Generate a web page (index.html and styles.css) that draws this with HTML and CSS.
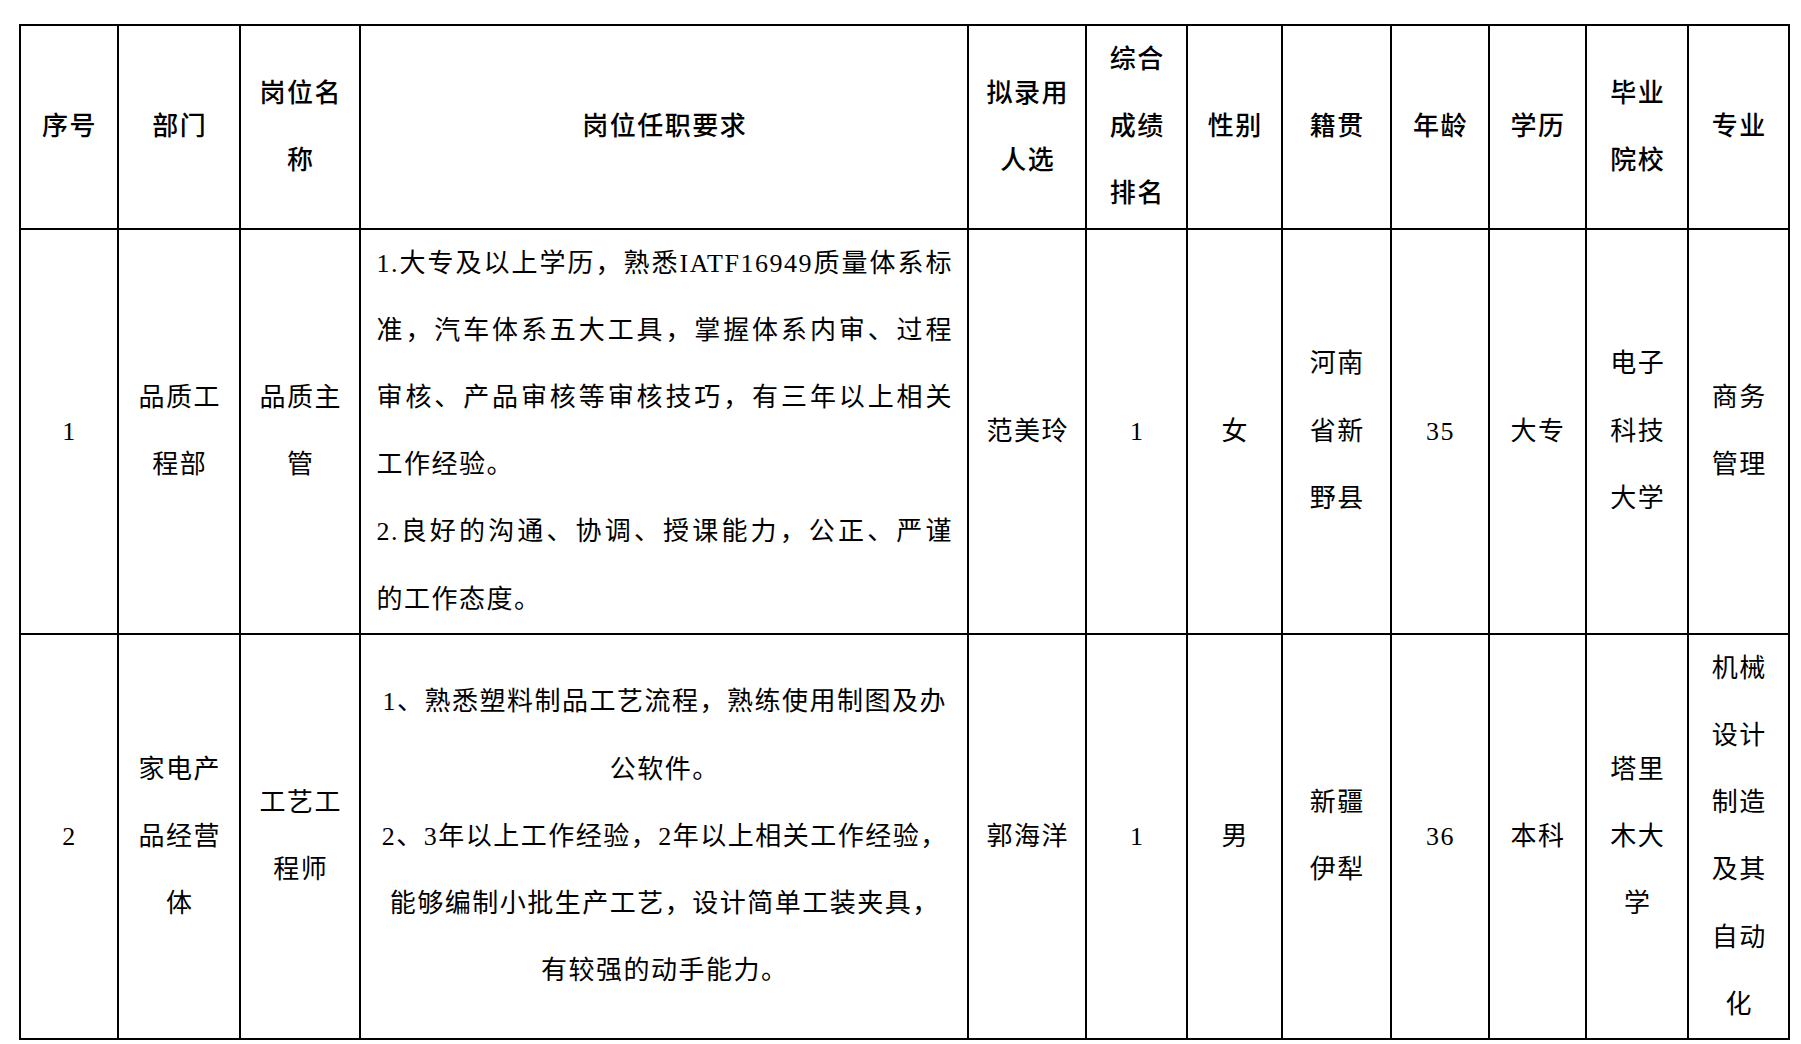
FILE: index.html
```html
<!DOCTYPE html>
<html lang="zh-CN">
<head>
<meta charset="utf-8">
<title>拟录用人选</title>
<link rel="stylesheet" href="styles.css">
</head>
<body>
<div class="grid">
  <div class="c h">序号</div>
  <div class="c h">部门</div>
  <div class="c h">岗位名<br>称</div>
  <div class="c h">岗位任职要求</div>
  <div class="c h">拟录用<br>人选</div>
  <div class="c h">综合<br>成绩<br>排名</div>
  <div class="c h">性别</div>
  <div class="c h">籍贯</div>
  <div class="c h">年龄</div>
  <div class="c h">学历</div>
  <div class="c h">毕业<br>院校</div>
  <div class="c h">专业</div>

  <div class="c">1</div>
  <div class="c">品质工<br>程部</div>
  <div class="c">品质主<br>管</div>
  <div class="c desc">
    <div class="para left">
      <div class="jl">1.大专及以上学历，熟悉IATF16949质量体系标</div>
      <div class="jl">准，汽车体系五大工具，掌握体系内审、过程</div>
      <div class="jl">审核、产品审核等审核技巧，有三年以上相关</div>
      <div class="ln">工作经验。</div>
      <div class="jl">2.良好的沟通、协调、授课能力，公正、严谨</div>
      <div class="ln">的工作态度。</div>
    </div>
  </div>
  <div class="c">范美玲</div>
  <div class="c">1</div>
  <div class="c">女</div>
  <div class="c">河南<br>省新<br>野县</div>
  <div class="c">35</div>
  <div class="c">大专</div>
  <div class="c">电子<br>科技<br>大学</div>
  <div class="c">商务<br>管理</div>

  <div class="c">2</div>
  <div class="c">家电产<br>品经营<br>体</div>
  <div class="c">工艺工<br>程师</div>
  <div class="c desc">
    <div class="para center">1、熟悉塑料制品工艺流程，熟练使用制图及办<br>公软件。<br>2、3年以上工作经验，2年以上相关工作经验，<br>能够编制小批生产工艺，设计简单工装夹具，<br>有较强的动手能力。</div>
  </div>
  <div class="c">郭海洋</div>
  <div class="c">1</div>
  <div class="c">男</div>
  <div class="c">新疆<br>伊犁</div>
  <div class="c">36</div>
  <div class="c">本科</div>
  <div class="c">塔里<br>木大<br>学</div>
  <div class="c">机械<br>设计<br>制造<br>及其<br>自动<br>化</div>
</div>
</body>
</html>
```

FILE: styles.css
```css
html, body {
  margin: 0;
  padding: 0;
  background: #ffffff;
}

body {
  color: #000000;
  font-family: "Liberation Serif", "Noto Sans CJK SC", serif;
}

.grid {
  display: grid;
  width: max-content;
  grid-template-columns: 98.5px 122px 120px 608px 118px 101px 95px 109px 97.5px 97.5px 102px 101px;
  margin: 24px 0 0 18.5px;
  border-left: 2px solid #000;
  border-top: 2px solid #000;
}

.c {
  box-sizing: border-box;
  border-right: 2px solid #000;
  border-bottom: 2px solid #000;
  display: flex;
  align-items: center;
  justify-content: center;
  text-align: center;
  font-size: 26px;
  line-height: 67.2px;
  letter-spacing: 1.5px;
  padding-left: 1.5px;
}

.h {
  font-weight: 500;
}

.desc {
  justify-content: flex-start;
  padding: 0 14px 0 15.5px;
}

.para {
  flex: 1;
  min-width: 0;
}

.left {
  text-align: left;
}

.center {
  text-align: center;
}

.jl {
  text-align: justify;
  text-align-last: justify;
}
```
